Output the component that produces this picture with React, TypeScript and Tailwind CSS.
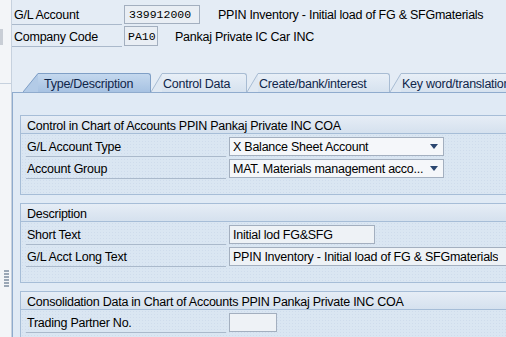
import React from "react";

const font = { fontFamily: '"Liberation Sans", Arial, sans-serif' };

function Tab({ label, width, active, slant = 11 }: { label: string; width: number; active?: boolean; slant?: number }) {
  const fill = active ? "#b3cbe7" : "#dfe8f2";
  const stroke = active ? "#7f9fc6" : "#a8bcd3";
  return (
    <div className="flex h-[19px] items-stretch">
      <svg width={slant} height={19} viewBox={`0 0 ${slant} 19`} className="block shrink-0">
        <polygon points={`0,19 ${slant},0 ${slant},19`} fill={fill} />
        <line x1={0} y1={19} x2={slant} y2={0.5} stroke={stroke} strokeWidth={1} />
      </svg>
      <div
        style={{ width }}
        className={
          active
            ? "flex items-center border-t border-r border-[#7f9fc6] rounded-tr-[3px] bg-gradient-to-b from-[#c4d8ee] to-[#a7c2e2] pl-[6px] pt-[2px] text-[#10264a]"
            : "flex items-center border-t border-r border-[#a8bcd3] rounded-tr-[3px] bg-gradient-to-b from-[#e8eff7] to-[#d6e2ef] pl-[1px] pt-[2px] text-[#10264a]"
        }
      >
        <span className="whitespace-nowrap">{label}</span>
      </div>
    </div>
  );
}

function Dropdown({ value }: { value: string }) {
  return (
    <div className="ml-[3px] flex h-[19px] w-[215px] items-center border border-[#a3afbf] bg-[#f5f7fa] pl-[3px] pr-[5px]">
      <span className="flex-1 whitespace-nowrap overflow-hidden pt-[3px]">{value}</span>
      <svg width="8" height="5" viewBox="0 0 8 5" className="shrink-0">
        <polygon points="0,0 8,0 4,5" fill="#2a4670" />
      </svg>
    </div>
  );
}

function Field({ value, width }: { value: string; width: number }) {
  return (
    <div style={{ width }} className="ml-[3px] flex h-[19px] items-center border border-[#a3afbf] bg-[#eef2f6] pl-[3px] pt-[3px]">
      <span className="whitespace-nowrap overflow-hidden">{value}</span>
    </div>
  );
}

function Row({ label, children }: { label: string; children?: React.ReactNode }) {
  return (
    <div className="flex h-[22px] items-center">
      <div className="flex h-full w-[200px] items-center border-b border-[#aab9cb] pl-[1px] pt-[3px]">{label}</div>
      {children}
    </div>
  );
}

function Group({ title, children, last }: { title: string; children: React.ReactNode; last?: boolean }) {
  return (
    <div className={"w-[560px] border border-[#a6bdd7] bg-[#dae6f2] bg-[radial-gradient(#cfdcec_0.6px,transparent_0.7px)] bg-[length:3px_3px] " + (last ? "" : "mb-[8px]")}>
      <div className="flex h-[18px] items-center border-b border-[#a6bdd7] bg-gradient-to-b from-[#e6edf6] to-[#d5e1ee] pl-[6px] pt-[3px]">
        {title}
      </div>
      <div className={"pl-[5px] pt-[1px] " + (last ? "pb-[4px]" : "pb-[15px]")}>{children}</div>
    </div>
  );
}

export default function App() {
  return (
    <div style={font} className="flex h-[337px] w-[506px] overflow-hidden bg-[#e4ecf5] text-[12.5px] tracking-[-0.25px] text-black">
      {/* left splitter strip */}
      <div className="flex w-[12px] shrink-0 flex-col border-r border-[#c6d1de] bg-[#f3f5f8]">
        <div className="mt-[29px] h-[16px] w-[3px] bg-[#c9ced6]" />
        <div className="mt-[38px] h-px w-full bg-[#c6d1de]" />
        <div className="ml-[4px] mt-[186px] grid w-[5px] grid-cols-1 gap-[1px]">
          <div className="h-[2px] bg-[#9aa7b6]" />
          <div className="h-[2px] bg-[#9aa7b6]" />
          <div className="h-[2px] bg-[#9aa7b6]" />
          <div className="h-[2px] bg-[#9aa7b6]" />
          <div className="h-[2px] bg-[#9aa7b6]" />
          <div className="h-[2px] bg-[#9aa7b6]" />
        </div>
      </div>

      <div className="flex min-w-0 flex-1 flex-col">
        {/* header fields */}
        <div className="pt-[3px]">
          <div className="flex h-[22px] items-center">
            <div className="flex h-full w-[110px] items-center border-b border-[#aab9cb] pl-[2px] pt-[3px]">G/L Account</div>
            <div className="ml-[2px] flex h-[19px] w-[76px] items-center border border-[#a3afbf] bg-[#e9eef4] pl-[4px] pt-[1px] font-['Liberation_Mono',monospace] text-[11.5px] tracking-normal">
              339912000
            </div>
            <span className="ml-[18px] whitespace-nowrap pt-[3px]">PPIN Inventory - Initial load of FG &amp; SFGmaterials</span>
          </div>
          <div className="flex h-[22px] items-center">
            <div className="flex h-full w-[110px] items-center border-b border-[#aab9cb] pl-[2px] pt-[3px]">Company Code</div>
            <div className="ml-[2px] flex h-[20px] w-[34px] items-center border border-[#a3afbf] bg-[#e9eef4] pl-[3px] pt-[1px] font-['Liberation_Mono',monospace] text-[11.5px] tracking-normal">
              PA10
            </div>
            <span className="ml-[17px] whitespace-nowrap pt-[3px]">Pankaj Private IC Car INC</span>
          </div>
        </div>

        {/* tab strip */}
        <div className="mt-[26px] flex pl-[11px]">
          <Tab label="Type/Description" width={113} active slant={15} />
          <Tab label="Control Data" width={85} />
          <Tab label="Create/bank/interest" width={132} />
          <Tab label="Key word/translation" width={130} />
        </div>

        {/* tab content */}
        <div className="flex-1 border-l border-t border-[#8fabcd] bg-[#e0eaf5] pl-[7px] pt-[22px]">
          <Group title="Control in Chart of Accounts PPIN Pankaj Private INC COA">
            <Row label="G/L Account Type">
              <Dropdown value="X Balance Sheet Account" />
            </Row>
            <Row label="Account Group">
              <Dropdown value="MAT. Materials management acco..." />
            </Row>
          </Group>
          <Group title="Description">
            <Row label="Short Text">
              <Field value="Initial lod FG&SFG" width={146} />
            </Row>
            <Row label="G/L Acct Long Text">
              <Field value="PPIN Inventory - Initial load of FG & SFGmaterials" width={290} />
            </Row>
          </Group>
          <Group title="Consolidation Data in Chart of Accounts PPIN Pankaj Private INC COA" last>
            <Row label="Trading Partner No.">
              <Field value="" width={48} />
            </Row>
          </Group>
        </div>
      </div>
    </div>
  );
}
